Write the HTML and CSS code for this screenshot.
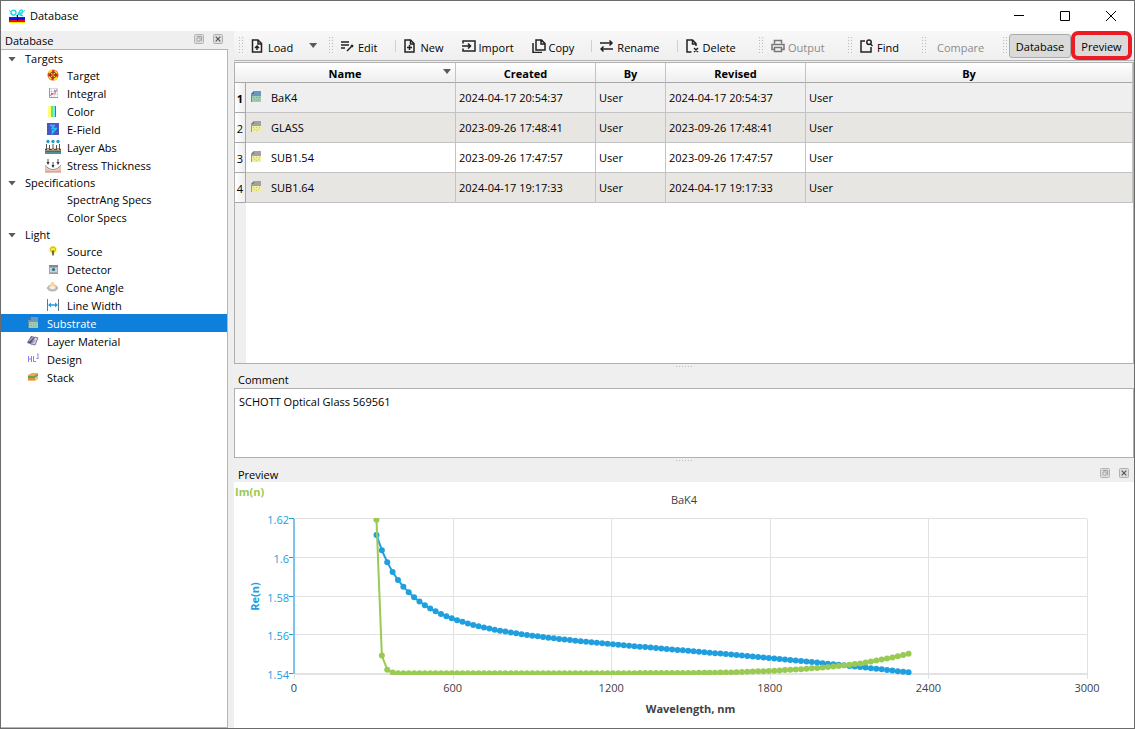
FILE: index.html
```html
<!DOCTYPE html>
<html lang="en">
<head>
<meta charset="utf-8">
<title>Database</title>
<link rel="stylesheet" href="styles.css">
</head>
<body>
<svg class="defs" aria-hidden="true">
  <symbol id="float" viewBox="0 0 10 10">
    <rect x=".5" y=".5" width="9" height="9" rx="1" fill="#dcdcdc" stroke="#b4b4b4"/>
    <path d="M3 4h3v3H3z" fill="#eee" stroke="#999" stroke-width=".8"/><path d="M3 2.500h4.500v4.500" fill="none" stroke="#999" stroke-width=".9"/>
  </symbol>
  <symbol id="close" viewBox="0 0 10 10">
    <rect x=".5" y=".5" width="9" height="9" rx="1" fill="#dedede" stroke="#b0b0b0"/>
    <path d="M2.700 2.700l4.600 4.600M7.300 2.700L2.700 7.300" stroke="#555" stroke-width="1.200"/>
  </symbol>
  <symbol id="glass" viewBox="0 0 10 11">
    <path d="M3 0h7v5H0V3z" fill="#a2a2a2"/><path d="M0 3l3-3v3z" fill="#7d7d7d"/>
    <path d="M1 5h9v6H1z" fill="#efee9e"/><path d="M0 4h1v7H0z" fill="#999"/>
    <path d="M2 6h1v1H2zM5 6h1v1H5zM8 6h1v1H8zM3 8h1v1H3zM7 8h1v1H7zM5 9h1v1H5z" fill="#c9c67c"/>
  </symbol>
  <symbol id="glass-blue" viewBox="0 0 10 11">
    <path d="M3 0h7v5H0V3z" fill="#6d96bb"/><path d="M0 3l3-3v3z" fill="#4c7190"/>
    <path d="M1 5h9v6H1z" fill="#9fcbb4"/><path d="M0 4h1v7H0z" fill="#628ba1"/>
    <path d="M2 6h1v1H2zM5 6h1v1H5zM8 6h1v1H8zM3 8h1v1H3zM7 8h1v1H7zM5 9h1v1H5z" fill="#7aaa9b"/>
  </symbol>
</svg>

<div class="window">
  <header class="titlebar">
    <svg class="app-icon" viewBox="0 0 16 14"><path d="M0 1l5 6M16 1l-5 6" stroke="#7aa" stroke-width=".8"/><circle cx="4.500" cy="3.600" r="2.500" fill="none" stroke="#19dce8" stroke-width="1.400"/><path d="M7 7c3 0 3-6 5-6 2 0 2 2 0 3l-2 1 4 2" fill="none" stroke="#19dce8" stroke-width="1.400"/><path d="M0 8h16v1H0z" fill="#a00018"/><path d="M0 9h16v2H0z" fill="#1212e2"/><path d="M0 11h16v2H0z" fill="#e01018"/><path d="M0 13h16v1H0z" fill="#ffe800"/><path d="M8.500 6v6" stroke="#111"/></svg>
    <h1 class="title">Database</h1>
    <button class="win-btn" aria-label="Minimize"><svg viewBox="0 0 10 10"><path d="M0 4.500h10"/></svg></button>
    <button class="win-btn" aria-label="Maximize"><svg viewBox="0 0 10 10"><path d="M.5.5h9v9h-9z"/></svg></button>
    <button class="win-btn" aria-label="Close"><svg viewBox="0 0 10 10"><path d="M0 0l10 10M10 0L0 10"/></svg></button>
  </header>

  <div class="workspace">
    <aside class="dock">
      <div class="dock-head">
        <h2 class="dock-title">Database</h2>
        <button class="dock-btn" aria-label="Float panel"><svg><use href="#float"/></svg></button>
        <button class="dock-btn" aria-label="Close panel"><svg><use href="#close"/></svg></button>
      </div>
      <ul class="tree">
        <li><div class="node group"><span class="caret"></span>Targets</div>
          <ul>
            <li class="node child"><svg viewBox="0 0 16 16"><circle cx="8" cy="8" r="5.500" fill="#e8402a"/><path d="M8 8L3 5.500A5.500 5.500 0 0 1 7 2.500zM8 8l5 2.500a5.500 5.500 0 0 1-4 3zM8 8l2-5 3 3zM8 8l-2 5-3-3z" fill="#f5dc28"/><circle cx="8" cy="8" r="3" fill="none" stroke="#8a4a18"/><path d="M8 4v8M4 8h8" stroke="#7c2a10"/><circle cx="8" cy="8" r="1.200" fill="#fb6a28"/></svg>Target</li>
            <li class="node child"><svg viewBox="0 0 16 16"><path d="M4 3.500h9M4 6.500h9M4 9.500h9M6.500 3v9M9.500 3v9M12.500 3v9" stroke="#dcd6dc"/><path d="M4.500 3v9.500H13" fill="none" stroke="#999"/><path d="M5 11l3-3 2 1 2-5" fill="none" stroke="#d88a9c"/><circle cx="10" cy="6" r="1" fill="#8a84c4"/><circle cx="7" cy="9" r="1" fill="#d34c5f"/></svg>Integral</li>
            <li class="node child"><svg viewBox="0 0 16 16"><path d="M3 3h3v11H3z" fill="#ffff75"/><path d="M6 3h3v11H6z" fill="#5dec6c"/><path d="M8 3h2v11H8z" fill="#7fe4f4"/><path d="M10 3h1v11h-1z" fill="#5260ee"/></svg>Color</li>
            <li class="node child"><svg viewBox="0 0 16 16"><path d="M2 2h12v12H2z" fill="#4a54c4"/><path d="M5 4.500h4L7 7.500h4L7.500 12V9" fill="none" stroke="#24c4f7" stroke-width="1.600"/></svg>E-Field</li>
            <li class="node child"><svg viewBox="0 0 16 16"><path d="M0 9h16v3H0z" fill="#f8d9b4"/><path d="M0 12h16v3H0z" fill="#568b9b"/><path d="M0 12h16" stroke="#2f4b55"/><path d="M1.500 5v5M4.500 6v4M8 5v5M11.500 6v4M14.500 5v5" stroke="#555"/><path d="M0 10.500h2l1-1 1 1h3l1-1 1 1h3l1-1 1 1h2" fill="none" stroke="#444"/><circle cx="3" cy="2.500" r="1.700" fill="#2a9cc4"/><circle cx="8" cy="2.500" r="1.700" fill="#2a9cc4"/><circle cx="13" cy="2.500" r="1.700" fill="#2a9cc4"/></svg>Layer Abs</li>
            <li class="node child"><svg viewBox="0 0 16 16"><path d="M0 9q8 9 16 0v6H0z" fill="#f0c0aa"/><path d="M0 8.500q8 8.500 16 0" fill="none" stroke="#888"/><path d="M3 2v4M8 5v5M13 2v4" stroke="#555"/><path d="M1.500 5h3L3 8zM6.500 8h3L8 11zM11.500 5h3L13 8z" fill="#333"/><path d="M0 15h16" stroke="#be8976"/></svg>Stress Thickness</li>
          </ul>
        </li>
        <li><div class="node group"><span class="caret"></span>Specifications</div>
          <ul>
            <li class="node child bare">SpectrAng Specs</li>
            <li class="node child bare">Color Specs</li>
          </ul>
        </li>
        <li><div class="node group"><span class="caret"></span>Light</div>
          <ul>
            <li class="node child"><svg viewBox="0 0 16 16"><circle cx="8" cy="7" r="4.500" fill="#fffa9a"/><circle cx="8" cy="6.500" r="2.600" fill="#f8f020" stroke="#b8ac30"/><path d="M7 7l1 1 1-1v4H7z" fill="#666"/><path d="M7 11h2v1.500H7z" fill="#777"/></svg>Source</li>
            <li class="node child"><svg viewBox="0 0 16 16"><path d="M4 4h9v9H4z" fill="#a9acb0"/><path d="M4 4h9v2H4z" fill="#888"/><path d="M5 7h7v4H5z" fill="#c4d4da"/><circle cx="8.500" cy="8.500" r="1.600" fill="#28719a"/><path d="M4 12.500h9" stroke="#999"/></svg>Detector</li>
            <li class="node child cone"><svg viewBox="0 0 16 16"><ellipse cx="7.500" cy="9" rx="5" ry="3" fill="#c4c4c4" stroke="#999" stroke-width=".8"/><path d="M4 8l2.500-5h2L11 8q-3.500 3-7 0z" fill="#fbd58f"/><ellipse cx="7.500" cy="8.500" rx="2.600" ry="1.500" fill="#f9f3e5"/></svg>Cone Angle</li>
            <li class="node child"><svg viewBox="0 0 16 16"><path d="M2.500 2v12M13.500 2v12" stroke="#667783"/><path d="M4 8h8" stroke="#249eda" stroke-width="1.500"/><path d="M3 8l3-2.500v5zM13 8l-3-2.500v5z" fill="#249eda"/></svg>Line Width</li>
          </ul>
        </li>
        <li class="node top selected"><svg viewBox="-3 -2 16 16"><use href="#glass-blue" width="10" height="11"/></svg>Substrate</li>
        <li class="node top"><svg viewBox="0 0 16 16"><path d="M2 10l4-7 4 1-4 7z" fill="#555b7b"/><path d="M6 11l4-7 3 1-3 7z" fill="#d7d6e6" stroke="#77778d"/><path d="M4 8l4-4M6 12l4-5" stroke="#a7a3cf" stroke-width="1.500"/></svg>Layer Material</li>
        <li class="node top"><svg viewBox="0 0 16 16"><path d="M3.500 5v6M6.500 5v6M3 8h4M8.500 5v5.500H11M12 3h1v4M11.500 7.500h2" fill="none" stroke="#8880f2"/></svg>Design</li>
        <li class="node top"><svg viewBox="0 0 16 16"><path d="M3 6l4-2h6v2l-3 2H3z" fill="#eda950"/><path d="M3 7h6l4-2v2l-3 2H3z" fill="#68a34d"/><path d="M3 9h7l3-2v3l-3 2H3z" fill="#f1c26a"/><path d="M3 10h7" stroke="#d1544b"/></svg>Stack</li>
      </ul>
    </aside>

    <main class="content">
      <div class="toolbar">
        <div class="section load">
          <span class="handle"></span>
          <button class="tool"><svg viewBox="0 0 14 14"><path d="M1.500 1H7l3.500 3.500V13h-9z"/><path d="M7 1v4h4"/><path d="M6 11V7.500M4 9l2-2 2 2"/></svg>Load</button>
          <button class="menu-arrow" aria-label="Load options"><span class="caret"></span></button>
        </div>
        <div class="section edit">
          <span class="handle"></span>
          <button class="tool"><svg viewBox="0 0 14 14"><path d="M0 3h8M0 6h8M0 9h4M6 12l6-6"/><path d="M10 6l2 2"/></svg>Edit</button>
          <span class="rule"></span>
          <button class="tool"><svg viewBox="0 0 14 14"><path d="M1 1h5.500L10 4.500V13H1z"/><path d="M6.500 1v4H10M5.500 6v5M3 8.500h5"/></svg>New</button>
          <button class="tool"><svg viewBox="0 0 14 14"><path d="M1 4.500V2h12v10H1V9.500M0 7h8.500M6 4.500L8.500 7 6 9.500"/></svg>Import</button>
          <button class="tool"><svg viewBox="0 0 14 14"><path d="M4 1h5.500L13 4.500V11H4zM9 1v4h4M1 4v9.500h9"/></svg>Copy</button>
          <span class="rule"></span>
          <button class="tool"><svg viewBox="0 0 14 14"><path d="M0 4h12M9.500 1.500L12 4 9.500 6.500M13 10H1M3.500 7.500L1 10l2.500 2.500"/></svg>Rename</button>
          <span class="rule"></span>
          <button class="tool"><svg viewBox="0 0 14 14"><path d="M5.500 13H1V1h5.500L10 4.500V7M6.500 1v4H10M8 9l4 4M12 9l-4 4"/></svg>Delete</button>
        </div>
        <div class="section output">
          <span class="handle"></span>
          <button class="tool" disabled><svg viewBox="0 0 14 14"><path d="M3.500 4.500V1.500h7v3M3.500 10.500H1v-5h12v5h-2.500M3.500 8.500h7v4h-7z"/></svg>Output</button>
        </div>
        <div class="section find">
          <span class="handle"></span>
          <button class="tool"><svg viewBox="0 0 14 14"><path d="M5 2H1v11h10V8"/><circle cx="9" cy="3.200" r="2.200"/><path d="M10.500 5l2 2"/></svg>Find</button>
        </div>
        <div class="section compare">
          <span class="handle"></span>
          <button class="tool text-only" disabled>Compare</button>
        </div>
        <div class="section views">
          <span class="handle"></span>
          <button class="toggle" aria-pressed="true">Database</button>
          <button class="toggle marked" aria-pressed="true">Preview</button>
        </div>
      </div>

      <div class="grid-area">
        <table class="records">
          <colgroup><col class="c-num"><col class="c-name"><col class="c-date"><col class="c-by"><col class="c-date"><col></colgroup>
          <thead>
            <tr><th colspan="2" class="sorted">Name<span class="caret"></span></th><th>Created</th><th>By</th><th>Revised</th><th>By</th></tr>
          </thead>
          <tbody>
            <tr class="current"><th>1</th><td><span class="name"><svg><use href="#glass-blue"/></svg>BaK4</span></td><td>2024-04-17 20:54:37</td><td>User</td><td>2024-04-17 20:54:37</td><td>User</td></tr>
            <tr class="alt"><th>2</th><td><span class="name"><svg><use href="#glass"/></svg>GLASS</span></td><td>2023-09-26 17:48:41</td><td>User</td><td>2023-09-26 17:48:41</td><td>User</td></tr>
            <tr><th>3</th><td><span class="name"><svg><use href="#glass"/></svg>SUB1.54</span></td><td>2023-09-26 17:47:57</td><td>User</td><td>2023-09-26 17:47:57</td><td>User</td></tr>
            <tr class="alt"><th>4</th><td><span class="name"><svg><use href="#glass"/></svg>SUB1.64</span></td><td>2024-04-17 19:17:33</td><td>User</td><td>2024-04-17 19:17:33</td><td>User</td></tr>
          </tbody>
        </table>
      </div>

      <div class="splitter"></div>
      <label class="panel-label" for="comment">Comment</label>
      <textarea class="comment" id="comment">SCHOTT Optical Glass 569561</textarea>
      <div class="splitter"></div>

      <section class="preview">
        <div class="dock-head preview-head">
          <h2 class="dock-title">Preview</h2>
          <button class="dock-btn" aria-label="Float panel"><svg><use href="#float"/></svg></button>
          <button class="dock-btn" aria-label="Close panel"><svg><use href="#close"/></svg></button>
        </div>
        <div class="chart"><svg id="chart" role="img" aria-label="Refractive index of BaK4"></svg></div>
      </section>
    </main>
  </div>
</div>
<script src="chart.js"></script>
</body>
</html>
```

FILE: styles.css
```css
* { box-sizing: border-box; }

body {
  margin: 0;
  font: 11px/16px "Open Sans", "Noto Sans", sans-serif;
  color: #000;
}

button, textarea { font: inherit; color: inherit; }
button { border: 0; background: none; padding: 0; }
h1, h2 { margin: 0; font-size: 11px; font-weight: 400; }
ul { margin: 0; padding: 0; list-style: none; }

.defs { position: absolute; width: 0; height: 0; }

.window {
  display: flex;
  flex-direction: column;
  height: 100vh;
  border: 1px solid #6b6b6b;
  background: #efefef;
}

.titlebar {
  display: flex;
  align-items: center;
  height: 30px;
  flex: none;
  padding-left: 8px;
  background: #fff;
}
.app-icon { width: 16px; height: 14px; margin-right: 5px; }
.title { flex: 1; }
.win-btn { width: 46px; height: 30px; display: grid; place-items: center; }
.win-btn svg { width: 10px; height: 10px; fill: none; stroke: #000; }

.workspace { flex: 1; display: flex; gap: 6px; min-height: 0; }

.dock { width: 227px; flex: none; display: flex; flex-direction: column; }
.dock-head {
  display: flex;
  align-items: center;
  height: 18px;
  flex: none;
  padding: 0 5px 0 4px;
  gap: 9px;
}
.preview-head { height: 17px; }
.dock-title { flex: 1; padding-top: 2px; }
.dock-btn { width: 10px; height: 10px; margin-bottom: 2px; }
.dock-btn svg { display: block; width: 10px; height: 10px; }

.tree { flex: 1; border: 1px solid #b5b5b5; border-left: 0; background: #fff; }
.node { display: flex; align-items: center; height: 18px; padding-top: 2px; }
.node svg { width: 16px; height: 16px; margin: 0 6px 2px 0; flex: none; }
.group { height: 16px; padding-left: 7px; gap: 9px; }
.child { padding-left: 44px; }
.child.bare { padding-left: 66px; }
.child.cone svg { margin-right: 5px; }
.top { padding-left: 24px; }
.selected { background: #0f7fdc; color: #fff; }

.caret {
  width: 8px;
  height: 5px;
  background: #5a5a5a;
  clip-path: polygon(0 0, 100% 0, 50% 100%);
}

.content { flex: 1; display: flex; flex-direction: column; min-width: 0; }

.toolbar {
  display: flex;
  height: 30px;
  flex: none;
  padding-left: 5px;
  border-bottom: 1px solid #b4b4b4;
  background: linear-gradient(#f8f8f8, #efefef);
}
.section { display: flex; align-items: center; flex: none; }
.load { width: 90px; }
.edit { width: 430px; }
.output { width: 89px; }
.find { width: 74px; }
.compare { width: 81px; }
.views { flex: 1; }
.handle {
  width: 6px;
  height: 18px;
  flex: none;
  background:
    linear-gradient(#f3f3f3, #f3f3f3) 1px 0 / 2px 100% no-repeat,
    linear-gradient(#f3f3f3, #f3f3f3) 4px 0 / 2px 100% no-repeat,
    repeating-linear-gradient(#bbb 0 1px, #f3f3f3 1px 3px);
}
.tool {
  display: flex;
  align-items: center;
  gap: 3px;
  height: 24px;
  padding: 5px 8px 0 6px;
}
.tool.text-only { padding-left: 9px; }
.tool + .tool { margin-left: 4px; }
.rule + .tool { padding-left: 8px; }
.tool svg {
  width: 14px;
  height: 14px;
  margin-bottom: 5px;
  fill: none;
  stroke: #222;
  stroke-width: 1.5;
}
.tool:disabled { color: #8c8c8c; }
.tool:disabled svg { stroke: #777; }
.rule { width: 1px; height: 12px; margin-left: 9px; background: #d0d0d0; }
.menu-arrow { padding: 6px 8px; }
.menu-arrow .caret { display: block; }
.toggle {
  height: 24px;
  padding-top: 2px;
  flex: 0 0 62px;
  border: 1px solid #aaa;
  border-radius: 3px;
  background: #dadada;
}
.toggle.marked { height: 29px; flex-basis: 61px; border: 4px solid #ed1c24; border-radius: 7px; }

.grid-area {
  flex: 1;
  min-height: 0;
  margin-top: 1px;
  border: 1px solid #b0b0b0;
  background: linear-gradient(90deg, #efefef 11px, #fff 11px);
}
.records { width: 100%; table-layout: fixed; border-spacing: 0; }
.c-num { width: 11px; }
.c-name { width: 210px; }
.c-date { width: 140px; }
.c-by { width: 70px; }
.records td, .records th { padding: 0 3px; border: solid #c3c3c3; border-width: 0 1px 1px 0; }
.records thead th {
  height: 20px;
  padding-top: 2px;
  border-bottom-color: #a8a8a8;
  background: linear-gradient(#fff, #eee);
}
.sorted { position: relative; }
.sorted .caret { position: absolute; right: 4px; top: 6px; }
.records tbody tr { background: #fff; }
.records tbody tr.current { background: #efefef; }
.records tbody tr.alt { background: #e7e6e2; }
.records tbody td { height: 30px; }
.records tbody th {
  padding: 2px 0 0;
  font-weight: 400;
  border-color: #a8a8a8;
  background: linear-gradient(90deg, #fff, #eee);
}
.records tbody .current th { font-weight: 700; }
.name { display: flex; align-items: center; gap: 10px; padding-left: 2px; }
.name svg { width: 10px; height: 11px; margin-bottom: 2px; }

.splitter {
  height: 7px;
  flex: none;
  padding: 2px calc(50% - 8px) 4px;
  background: repeating-linear-gradient(90deg, #bbb 0 1px, transparent 1px 3px) content-box;
}
.panel-label { height: 17px; padding: 1px 4px 0; flex: none; }
.comment {
  display: block;
  height: 70px;
  flex: none;
  padding: 5px 4px;
  border: 1px solid #b0b0b0;
  background: #fff;
  resize: none;
  outline: 0;
}

.preview { height: 263px; flex: none; display: flex; flex-direction: column; }
.chart { flex: 1; min-height: 0; background: #fff; }
.chart svg { display: block; width: 100%; height: 100%; }
.chart text { fill: #404044; text-anchor: middle; }
.chart .name-x { font-weight: 700; }
.chart .tick-y { fill: #209fdf; text-anchor: end; }
.chart .name-re { fill: #209fdf; font-weight: 700; }
.chart .name-im { fill: #99ca53; font-weight: 700; text-anchor: start; }
.gridline { stroke: #e2e2e2; }
.axis-x { stroke: #e2e2e2; stroke-width: 2; }
.axis-y { stroke: #7cc4ec; stroke-width: 2; }
.mark-y { stroke: #209fdf; }
.line { fill: none; stroke-width: 2; }
.re { stroke: #209fdf; }
.im { stroke: #99ca53; }
.dot-re { fill: #209fdf; }
.dot-im { fill: #99ca53; }
```

FILE: chart.js
```js
const svg = document.getElementById("chart");
const NS = "http://www.w3.org/2000/svg";
const margin = { left: 60, right: 47, top: 37, bottom: 54 };

function add(tag, attrs, text, parent = svg) {
  const el = document.createElementNS(NS, tag);
  for (const key in attrs) el.setAttribute(key, attrs[key]);
  if (text) el.textContent = text;
  parent.appendChild(el);
  return el;
}

// Sellmeier dispersion of BaK4, wavelength in nanometres
function index(nm) {
  const q = (nm / 1000) ** 2;
  return Math.sqrt(1 + 1.28834642 * q / (q - 0.00779980626)
    + 0.132817724 * q / (q - 0.0315631177)
    + 0.945395373 * q / (q - 105.965875));
}

// Im(n) as a fraction of the axis height: [wavelength, value]
const absorption = [
  [312, 0.995], [332.4, 0.116], [352.7, 0.028], [373, 0.010], [394, 0.005],
  [1200, 0.005], [1500, 0.007], [1650, 0.010], [1800, 0.020], [1914, 0.030],
  [2040, 0.048], [2141, 0.068], [2243, 0.099], [2325, 0.131]
];
function extinction(nm) {
  let i = 1;
  while (i < absorption.length - 1 && absorption[i][0] < nm) i++;
  const [x0, y0] = absorption[i - 1], [x1, y1] = absorption[i];
  return y0 + (y1 - y0) * (nm - x0) / (x1 - x0);
}

function draw() {
  svg.replaceChildren();
  const w = svg.clientWidth, h = svg.clientHeight;
  const right = w - margin.right, bottom = h - margin.bottom;
  const px = nm => margin.left + (right - margin.left) * nm / 3000;
  const py = f => bottom - (bottom - margin.top) * f;

  const clip = add("clipPath", { id: "plot-clip" });
  add("rect", { x: margin.left, y: margin.top - 1, width: right - margin.left, height: bottom - margin.top + 2 }, "", clip);

  for (let nm = 0; nm <= 3000; nm += 600) {
    const x = Math.round(px(nm)) + 0.5;
    add("line", { class: "gridline", x1: x, x2: x, y1: margin.top, y2: bottom + 5 });
    add("text", { x: px(nm), y: bottom + 18 }, String(nm));
  }
  ["1.54", "1.56", "1.58", "1.6", "1.62"].forEach((label, i) => {
    const y = Math.round(py(i / 4)) - 0.5;
    add("line", { class: "gridline", x1: margin.left, x2: right, y1: y, y2: y });
    add("line", { class: "mark-y", x1: margin.left - 5, x2: margin.left, y1: y, y2: y });
    add("text", { class: "tick-y", x: margin.left - 5, y: y + 5 }, label);
  });
  add("line", { class: "axis-x", x1: margin.left, x2: right, y1: bottom, y2: bottom });
  add("line", { class: "axis-y", x1: margin.left, x2: margin.left, y1: margin.top, y2: bottom });

  const re = [], im = [];
  for (let i = 0; i < 100; i++) {
    const nm = 312 + i * 2013 / 99;
    re.push([px(nm), py((index(nm) - 1.5396) / 0.08)]);
    im.push([px(nm), py(extinction(nm))]);
  }
  const plot = add("g", { "clip-path": "url(#plot-clip)" });
  for (const [name, points] of [["re", re], ["im", im]]) {
    add("polyline", { class: "line " + name, points: points.join(" ") }, "", plot);
    for (const [cx, cy] of points) add("circle", { class: "dot-" + name, cx, cy, r: 3 }, "", plot);
  }

  add("text", { x: w / 2, y: 22 }, "BaK4");
  add("text", { class: "name-x", x: (margin.left + right) / 2, y: h - 15 }, "Wavelength, nm");
  add("text", { class: "name-im", x: 1, y: 14 }, "Im(n)");
  const mid = (margin.top + bottom) / 2;
  add("text", { class: "name-re", x: 25, y: mid, transform: `rotate(-90 25 ${mid})` }, "Re(n)");
}

draw();
window.addEventListener("resize", draw);
```
